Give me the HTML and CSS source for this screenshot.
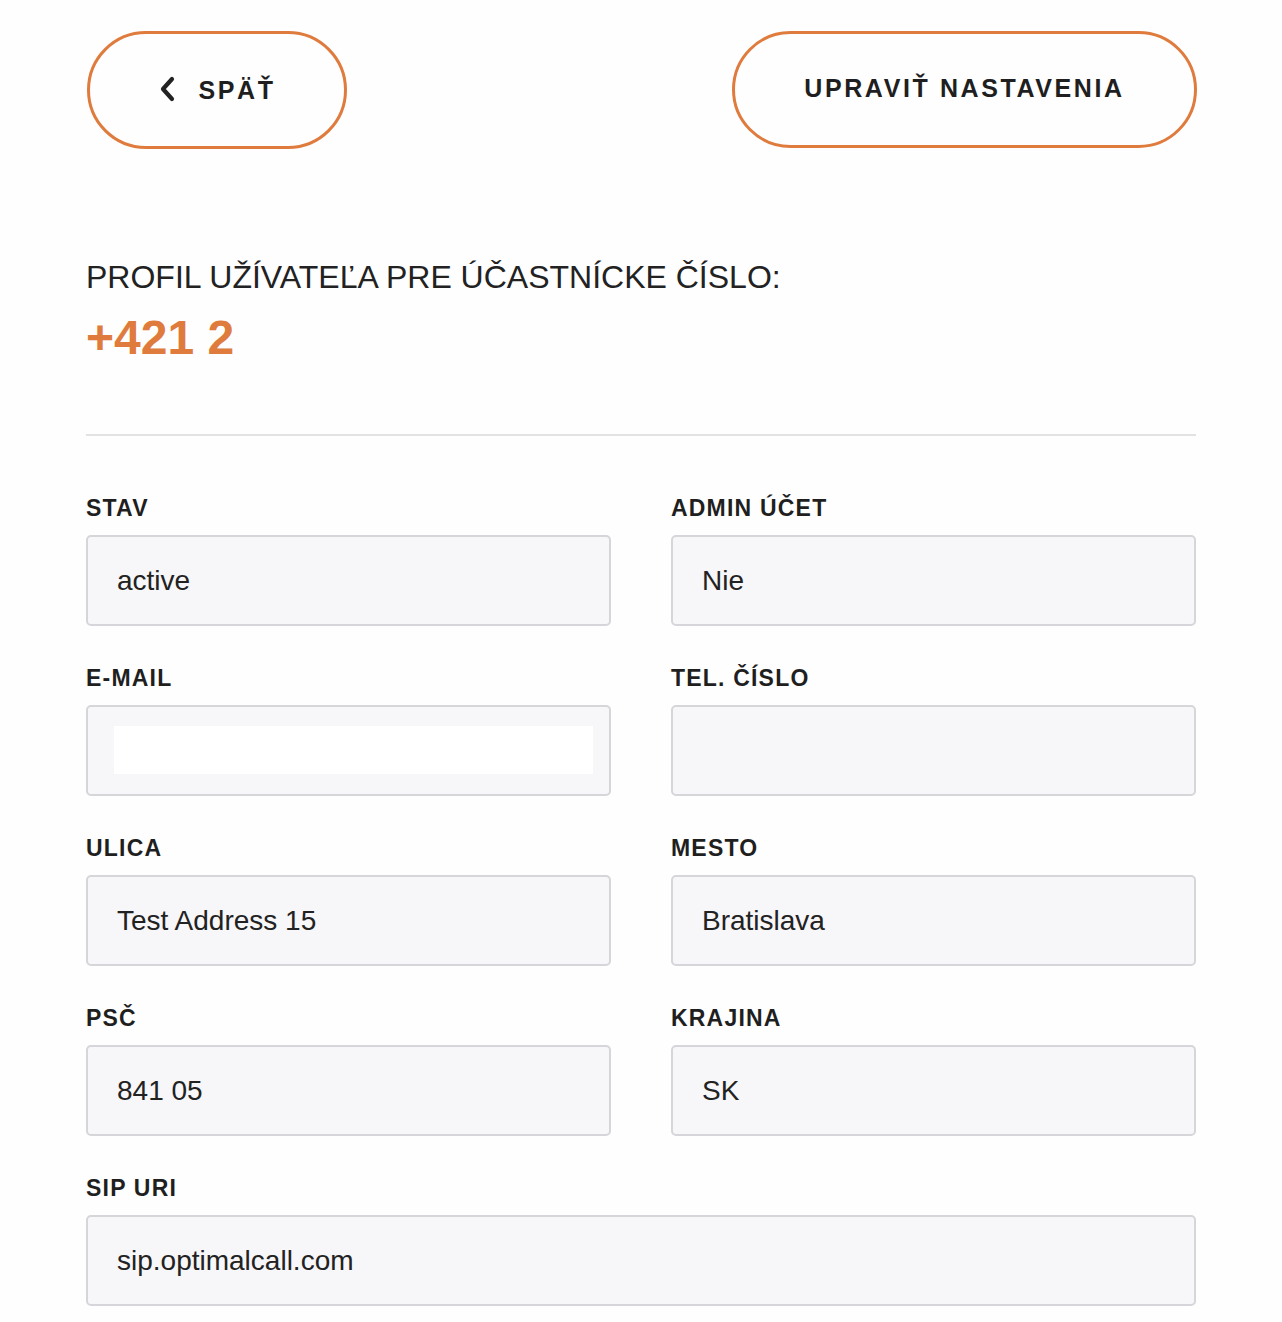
FILE: index.html
```html
<!DOCTYPE html>
<html lang="sk">
<head>
<meta charset="utf-8">
<title>Profil užívateľa</title>
<link rel="stylesheet" href="styles.css">
</head>
<body>
<div class="page">
  <div class="actions">
    <a class="btn btn-back" href="#">
      <svg class="chev" width="18" height="26" viewBox="0 0 18 26" aria-hidden="true"><path d="M14 3 L5 13 L14 23" fill="none" stroke="#222" stroke-width="4.2" stroke-linecap="round" stroke-linejoin="round"/></svg>
      <span>SPÄŤ</span>
    </a>
    <a class="btn btn-edit" href="#">UPRAVIŤ NASTAVENIA</a>
  </div>

  <h1 class="title">PROFIL UŽÍVATEĽA PRE ÚČASTNÍCKE ČÍSLO:</h1>
  <div class="number">+421 2</div>

  <hr class="divider">

  <div class="grid">
    <div class="field">
      <div class="label">STAV</div>
      <div class="input">active</div>
    </div>
    <div class="field">
      <div class="label">ADMIN ÚČET</div>
      <div class="input">Nie</div>
    </div>
    <div class="field">
      <div class="label">E-MAIL</div>
      <div class="input input-mask"><div class="mask"></div></div>
    </div>
    <div class="field">
      <div class="label">TEL. ČÍSLO</div>
      <div class="input"></div>
    </div>
    <div class="field">
      <div class="label">ULICA</div>
      <div class="input">Test Address 15</div>
    </div>
    <div class="field">
      <div class="label">MESTO</div>
      <div class="input">Bratislava</div>
    </div>
    <div class="field">
      <div class="label">PSČ</div>
      <div class="input">841 05</div>
    </div>
    <div class="field">
      <div class="label">KRAJINA</div>
      <div class="input">SK</div>
    </div>
    <div class="field field-wide">
      <div class="label">SIP URI</div>
      <div class="input">sip.optimalcall.com</div>
    </div>
  </div>
</div>
</body>
</html>
```

FILE: styles.css
```css
* { box-sizing: border-box; }

html, body {
  margin: 0;
  padding: 0;
  background: #fefefe;
}

body {
  font-family: "Liberation Sans", Arial, Helvetica, sans-serif;
  color: #222222;
}

.page {
  width: 1110px;
  margin: 0 auto;
  padding-top: 31px;
  padding-bottom: 40px;
}

.actions {
  display: flex;
  justify-content: space-between;
  align-items: flex-start;
  padding-left: 1px;
}

.btn {
  display: flex;
  align-items: center;
  justify-content: center;
  border: 3px solid #df7b3d;
  border-radius: 60px;
  color: #1f1f1f;
  text-decoration: none;
  font-weight: 700;
  font-size: 25px;
  letter-spacing: 2.6px;
}

.btn-back {
  width: 260px;
  height: 118px;
  gap: 22px;
}

.btn-back .chev {
  margin-top: -2px;
}

.btn-edit {
  width: 465px;
  height: 117px;
  margin-right: -1px;
  padding-bottom: 2px;
}

.title {
  margin: 109px 0 0 0;
  font-size: 32px;
  font-weight: 400;
  line-height: 38px;
  color: #222222;
  letter-spacing: 0;
}

.number {
  margin-top: 13px;
  font-size: 48px;
  font-weight: 700;
  line-height: 57px;
  color: #df7b3d;
}

.divider {
  margin: 68px 0 0 0;
  border: 0;
  border-top: 2px solid #e2e2e2;
  height: 0;
}

.grid {
  margin-top: 59px;
  display: grid;
  grid-template-columns: 1fr 1fr;
  column-gap: 60px;
  row-gap: 39px;
}

.field-wide {
  grid-column: 1 / span 2;
}

.label {
  font-size: 23px;
  font-weight: 700;
  line-height: 26px;
  letter-spacing: 1.2px;
  color: #1f1f1f;
  margin-bottom: 14px;
}

.input {
  height: 91px;
  border: 2px solid #d6d5d9;
  border-radius: 5px;
  background: #f7f6f8;
  display: flex;
  align-items: center;
  padding: 0 29px 0 29px;
  font-size: 28px;
  color: #222222;
}

.input-mask {
  padding: 0 16px 0 26px;
}

.mask {
  width: 100%;
  height: 48px;
  background: #ffffff;
  margin-bottom: 2px;
}
```
